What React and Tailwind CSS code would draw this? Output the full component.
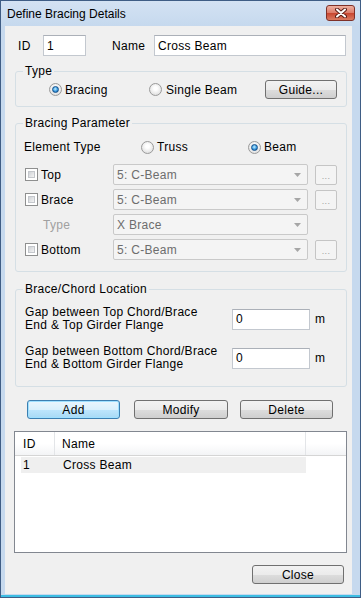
import React from 'react';

const Radio = ({ checked }) => (
  <span className="w-[13px] h-[13px] rounded-full border border-[#9a9a9a] bg-[radial-gradient(circle_at_50%_40%,#ffffff_20%,#d4d4d4)] flex items-center justify-center shrink-0">
    {checked && (
      <span className="w-[7px] h-[7px] rounded-full border border-[#14508a] bg-[radial-gradient(circle_at_45%_40%,#c4f0ff,#3a9ae0_55%,#0e4f8e)]" />
    )}
  </span>
);

const Check = () => (
  <span className="w-[13px] h-[13px] border border-[#8e8f8f] bg-white p-[2px] flex shrink-0">
    <span className="flex-1 border border-[#c4c7cc] bg-gradient-to-br from-[#cfd2d6] to-[#f4f4f4]" />
  </span>
);

const Combo = ({ value }) => (
  <div className="w-[195px] h-[21px] border border-[#c9c9c9] rounded-[2px] bg-[#f4f4f4] flex items-center pl-[3px] pr-[6px] text-[#6d6d6d]">
    <span className="flex-1">{value}</span>
    <svg width="7" height="4" viewBox="0 0 7 4">
      <path d="M0 0h7L3.5 4z" fill="#a6a6a6" />
    </svg>
  </div>
);

const Dots = () => (
  <div className="ml-[7px] w-[22px] h-[20px] border border-[#c5c5c5] rounded-[2px] bg-[#f4f4f4] flex items-end justify-center pb-[3px] text-[#a0a0a0] text-[9px] leading-[9px]">
    ...
  </div>
);

const Btn = ({ children, className }) => (
  <button className={`h-[19px] rounded-[3px] border border-[#707070] bg-[linear-gradient(#f2f2f2,#ebebeb_50%,#dddddd_51%,#cfcfcf)] flex items-center justify-center leading-none ${className}`}>
    {children}
  </button>
);

const Input = ({ value, className }) => (
  <div className={`h-[21px] bg-white border border-[#c3c8cf] border-t-[#abb0b8] flex items-center pl-[3px] ${className}`}>
    {value}
  </div>
);

export default function App() {
  return (
    <div className="w-[361px] h-[598px] border border-[#3f5d85] bg-[#c6d9ee] flex flex-col font-['Liberation_Sans',Arial,sans-serif] text-[12px] tracking-[0.3px] text-black overflow-hidden">
      {/* title bar */}
      <div className="h-[25px] flex items-start pl-[6px] pr-[5px] shrink-0 bg-[linear-gradient(#d3e2f3,#c6d9ee)]">
        <span className="mt-[6px] leading-[15px] tracking-normal flex-1">Define Bracing Details</span>
        <div className="mt-[4px] w-[29px] h-[16px] rounded-[3px] border border-[#7f3128] bg-[linear-gradient(#eeb0a0,#dc7a68_50%,#c8452f_51%,#da7b62)] flex items-center justify-center">
          <svg width="12" height="10" viewBox="0 0 12 10">
            <path d="M2 1.5l8 7M10 1.5l-8 7" stroke="#5a1d16" strokeWidth="4" strokeLinecap="round" />
            <path d="M2 1.5l8 7M10 1.5l-8 7" stroke="#ffffff" strokeWidth="2" strokeLinecap="round" />
          </svg>
        </div>
      </div>

      {/* body */}
      <div className="ml-[4px] w-[347px] h-[568px] bg-[#f0f0f0] flex flex-col pl-[9px] pr-[5px] pt-[9px] shrink-0">
        <div className="h-[21px] flex items-center">
          <span className="ml-[4px] w-[25px]">ID</span>
          <Input value="1" className="w-[43px]" />
          <span className="ml-[26px] w-[42px]">Name</span>
          <Input value="Cross Beam" className="w-[192px]" />
        </div>

        {/* Type */}
        <fieldset className="mt-[8px] ml-[1px] w-[332px] border border-[#d5dfe5] rounded-[3px]">
          <legend className="ml-[7px] px-[2px] leading-[14px]">Type</legend>
          <div className="pt-[2px] pb-[7px] pl-[33px] pr-[9px]">
            <div className="h-[19px] flex items-center">
              <label className="w-[100px] flex items-center gap-[3px]">
                <Radio checked />
                <span>Bracing</span>
              </label>
              <label className="flex items-center gap-[4px]">
                <Radio />
                <span>Single Beam</span>
              </label>
              <Btn className="ml-auto w-[72px]">Guide...</Btn>
            </div>
          </div>
        </fieldset>

        {/* Bracing Parameter */}
        <fieldset className="mt-[9px] ml-[1px] w-[332px] border border-[#d5dfe5] rounded-[3px]">
          <legend className="ml-[7px] px-[2px] leading-[14px]">Bracing Parameter</legend>
          <div className="pt-[9px] pb-[11px] pl-[8px] flex flex-col">
            <div className="h-[16px] flex items-center">
              <span className="w-[117px]">Element Type</span>
              <label className="w-[107px] flex items-center gap-[3px]">
                <Radio />
                <span>Truss</span>
              </label>
              <label className="flex items-center gap-[3px]">
                <Radio checked />
                <span>Beam</span>
              </label>
            </div>
            <div className="mt-[9px] h-[21px] flex items-center">
              <label className="w-[89px] pl-[1px] flex items-center gap-[3px]">
                <Check />
                <span>Top</span>
              </label>
              <Combo value="5: C-Beam" />
              <Dots />
            </div>
            <div className="mt-[4px] h-[21px] flex items-center">
              <label className="w-[89px] pl-[1px] flex items-center gap-[3px]">
                <Check />
                <span>Brace</span>
              </label>
              <Combo value="5: C-Beam" />
              <Dots />
            </div>
            <div className="mt-[4px] h-[21px] flex items-center">
              <span className="w-[89px] pl-[19px] text-[#a0a0a0]">Type</span>
              <Combo value="X Brace" />
            </div>
            <div className="mt-[4px] h-[21px] flex items-center">
              <label className="w-[89px] pl-[1px] flex items-center gap-[3px]">
                <Check />
                <span>Bottom</span>
              </label>
              <Combo value="5: C-Beam" />
              <Dots />
            </div>
          </div>
        </fieldset>

        {/* Brace/Chord Location */}
        <fieldset className="mt-[10px] ml-[1px] w-[332px] border border-[#d5dfe5] rounded-[3px]">
          <legend className="ml-[7px] px-[2px] leading-[14px]">Brace/Chord Location</legend>
          <div className="pt-[10px] pb-[15px] pl-[9px] flex flex-col">
            <div className="h-[26px] flex items-center">
              <div className="w-[207px] leading-[13px]">
                <div>Gap between Top Chord/Brace</div>
                <div>End &amp; Top Girder Flange</div>
              </div>
              <Input value="0" className="w-[78px]" />
              <span className="ml-[5px]">m</span>
            </div>
            <div className="mt-[13px] h-[26px] flex items-center">
              <div className="w-[207px] leading-[13px]">
                <div>Gap between Bottom Chord/Brace</div>
                <div>End &amp; Bottom Girder Flange</div>
              </div>
              <Input value="0" className="w-[78px]" />
              <span className="ml-[5px]">m</span>
            </div>
          </div>
        </fieldset>

        {/* actions */}
        <div className="mt-[13px] h-[19px] flex items-center">
          <button className="ml-[13px] w-[93px] h-[19px] rounded-[3px] border border-[#3c7fb1] bg-[linear-gradient(#eaf6fd,#d9f0fc_50%,#bee6fd_51%,#a7d9f5)] shadow-[inset_0_0_0_1px_#9fe0ff] flex items-center justify-center leading-none">
            Add
          </button>
          <Btn className="ml-[14px] w-[94px]">Modify</Btn>
          <Btn className="ml-[12px] w-[93px]">Delete</Btn>
        </div>

        {/* list */}
        <div className="mt-[12px] w-[333px] h-[122px] border border-[#828790] bg-white flex flex-col">
          <div className="h-[24px] flex border-b border-[#d5d5d5] bg-[linear-gradient(#ffffff,#ffffff_50%,#f3f4f6)]">
            <div className="w-[40px] pl-[8px] flex items-center border-r border-[#e3e5e8]">ID</div>
            <div className="w-[251px] pl-[7px] flex items-center border-r border-[#e3e5e8]">Name</div>
            <div className="flex-1" />
          </div>
          <div className="mt-[1px] ml-[6px] w-[285px] h-[16px] bg-[#efefef] flex items-center">
            <span className="w-[42px] pl-[2px]">1</span>
            <span>Cross Beam</span>
          </div>
        </div>

        <div className="mt-[12px] flex justify-end pr-[3px]">
          <Btn className="w-[92px]">Close</Btn>
        </div>
      </div>
      <div className="mt-auto h-[2px] bg-[#3cbde3]" />
    </div>
  );
}
